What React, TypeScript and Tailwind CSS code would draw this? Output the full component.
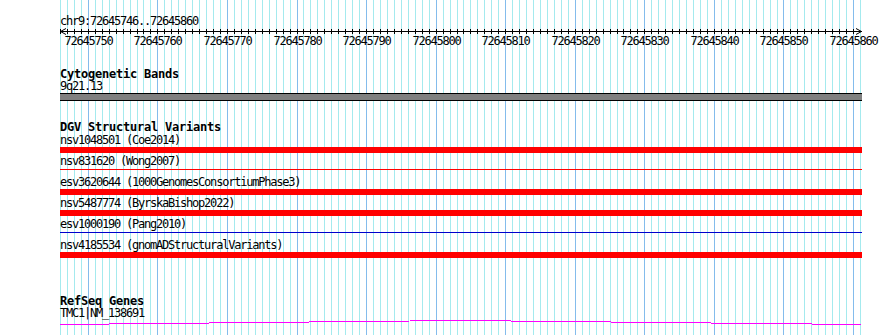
import React from "react";

/** Genome browser slice: chr9 ruler, cytoband, DGV variants and a RefSeq gene,
 * drawn over a one-line-per-base grid. */

const FIRST = 72645746;
const BASES = 115;
const PX = 800 / BASES;
const TRACK_W = 802;

const bx = (i: number) => Math.round(i * PX);

const variants = [
  { id: "nsv1048501", study: "Coe2014", kind: "bar" },
  { id: "nsv831620", study: "Wong2007", kind: "line", color: "bg-[#ff0000]" },
  { id: "esv3620644", study: "1000GenomesConsortiumPhase3", kind: "bar" },
  { id: "nsv5487774", study: "ByrskaBishop2022", kind: "bar" },
  { id: "esv1000190", study: "Pang2010", kind: "line", color: "bg-[#0000cc]" },
  { id: "nsv4185534", study: "gnomADStructuralVariants", kind: "bar" },
];

const mono = "font-['DejaVu_Sans_Mono',monospace]";
const small = `${mono} text-[12px] leading-[11px] tracking-[-1.22px] whitespace-pre text-black`;
const title = `${mono} text-[12px] leading-[12px] font-bold tracking-[-0.22px] whitespace-pre text-black`;

function Grid() {
  const lines = [];
  for (let i = 0; i <= BASES; i++) {
    const major = (FIRST + i) % 10 === 0;
    lines.push(
      <line
        key={i}
        x1={bx(i) + 0.5}
        x2={bx(i) + 0.5}
        y1={0}
        y2={335}
        stroke={major ? "#84bcec" : "#a4eaee"}
        strokeWidth={1}
      />
    );
  }
  return (
    <svg className="absolute left-[60px] top-0" width={TRACK_W} height={335} shapeRendering="crispEdges">
      {lines}
    </svg>
  );
}

function Ruler() {
  const ticks = [];
  const labels = [];
  for (let i = 0; i < BASES; i++) {
    const x = bx(i) + 0.5;
    ticks.push(<line key={i} x1={x} x2={x} y1={2} y2={7} stroke="#000" />);
    if ((FIRST + i) % 10 === 0) {
      labels.push(
        <text
          key={i}
          x={x}
          y={18}
          textAnchor="middle"
          fontFamily="DejaVu Sans Mono, monospace"
          fontSize={12}
          letterSpacing={-1.22}
          fill="#000"
        >
          {FIRST + i}
        </text>
      );
    }
  }
  return (
    <svg width={TRACK_W} height={20} className="block overflow-visible">
      <g shapeRendering="crispEdges">
        <line x1={0} x2={TRACK_W} y1={4.5} y2={4.5} stroke="#000" />
        {ticks}
      </g>
      <polyline points="6,1.5 0.5,4.5 6,7.5" fill="none" stroke="#000" />
      <polyline points={`${TRACK_W - 6},1.5 ${TRACK_W - 0.5},4.5 ${TRACK_W - 6},7.5`} fill="none" stroke="#000" />
      {labels}
    </svg>
  );
}

export default function App() {
  return (
    <div className="relative h-[335px] w-[890px] overflow-hidden bg-white">
      <Grid />
      <div className="relative ml-[60px] w-[802px] pt-[16px]">
        <p className={small}>chr9:72645746..72645860</p>
        <Ruler />

        <h3 className={`${title} mt-[21px]`}>Cytogenetic Bands</h3>
        <p className={`${small} mt-[1px]`}>9q21.13</p>
        <div className="mt-[1px] h-[8px] border-y border-black bg-[#808080]" />

        <h3 className={`${title} mt-[20px]`}>DGV Structural Variants</h3>
        <div className="mt-[2px]">
          {variants.map((v) => (
            <div key={v.id} className="h-[21px]">
              <p className={small}>
                {v.id} ({v.study})
              </p>
              <div className="mt-[1px] h-[6px]">
                {v.kind === "bar" ? (
                  <div className="h-[6px] bg-[#ff0000]" />
                ) : (
                  <div className={`mt-[2px] h-[1px] ${v.color}`} />
                )}
              </div>
            </div>
          ))}
        </div>

        <h3 className={`${title} mt-[34px]`}>RefSeq Genes</h3>
        <p className={`${small} mt-[1px]`}>TMC1|NM_138691</p>
        <svg width={TRACK_W} height={7} className="block" shapeRendering="crispEdges">
          <polyline points="0,5.5 400,1.5 801,5.5" fill="none" stroke="#ff00ff" strokeWidth={1} />
        </svg>
      </div>
    </div>
  );
}
